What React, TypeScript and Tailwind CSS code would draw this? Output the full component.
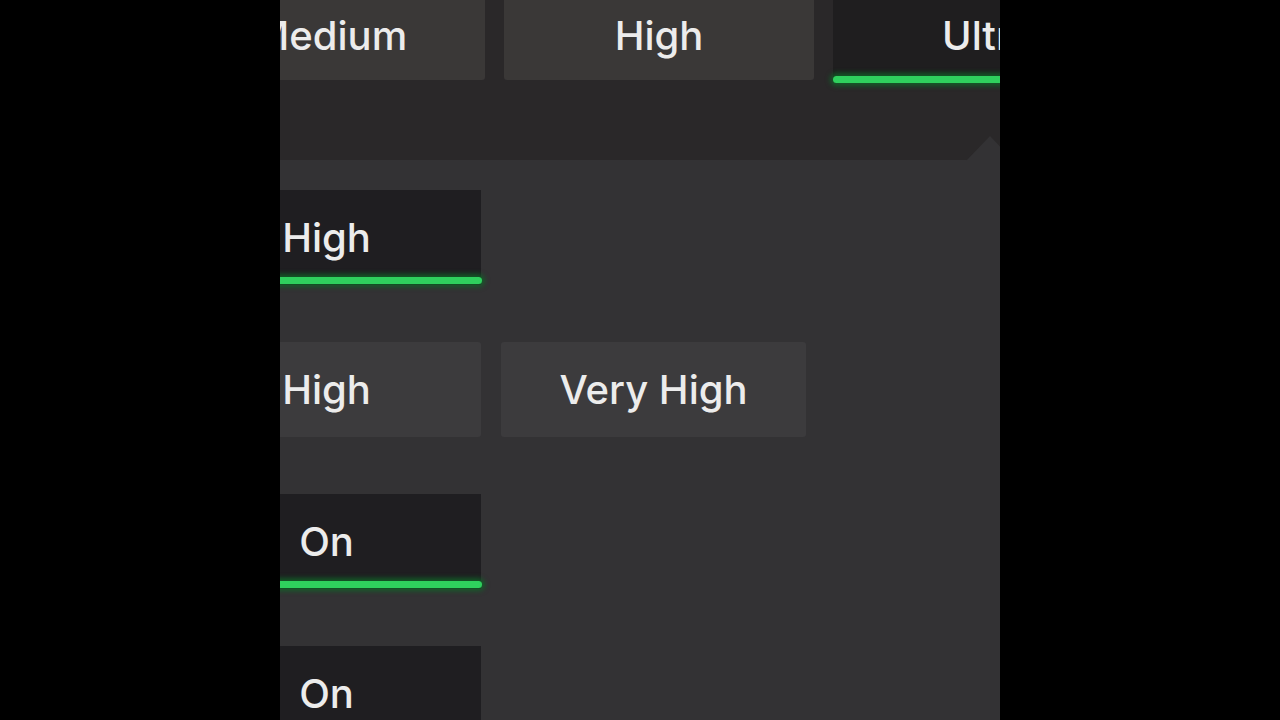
import React from "react";

const font = { fontFamily: "Inter, 'Noto Sans', sans-serif" };

function TopBtn({ label, selected }: { label: string; selected?: boolean }) {
  return (
    <div
      className={
        "relative shrink-0 w-[310px] h-[88px] flex items-center justify-center " +
        (selected ? "bg-[#1f1e1f]" : "bg-[#3a3837] rounded-[3px]")
      }
    >
      <span className="text-[40px] font-medium text-[#ececec] leading-none">
        {label}
      </span>
      {selected && (
        <div className="absolute left-0 right-0 bottom-[-3px] h-[7px] rounded-full bg-[#2fd05d] shadow-[0_0_5px_3px_rgba(16,100,40,0.85)]" />
      )}
    </div>
  );
}

function Btn({
  label,
  selected,
  wide,
}: {
  label: string;
  selected?: boolean;
  wide?: boolean;
}) {
  return (
    <div
      className={
        "relative shrink-0 h-[95px] flex items-center justify-center " +
        (wide ? "w-[309px] " : "w-[305px] ") +
        (selected ? "bg-[#1f1e21]" : "bg-[#3c3b3d] rounded-[3px]")
      }
    >
      <span className="text-[40px] font-medium text-[#ececec] leading-none">
        {label}
      </span>
      {selected && (
        <div className="absolute left-0 right-[-1px] bottom-[1px] h-[7px] rounded-full bg-[#2fd05d] shadow-[0_0_5px_3px_rgba(16,100,40,0.85)]" />
      )}
    </div>
  );
}

export default function App() {
  return (
    <div className="w-full h-[720px] bg-black flex justify-center overflow-hidden" style={font}>
      <div className="relative w-[720px] h-[720px] overflow-hidden flex flex-col">
        <div className="h-[160px] shrink-0 bg-[#2a2829]">
          <div className="flex gap-[19px] ml-[-105px] mt-[-8px]">
            <TopBtn label="Medium" />
            <TopBtn label="High" />
            <TopBtn label="Ultra" selected />
          </div>
        </div>
        <div className="flex-1 bg-[#333234] pt-[30px]">
          <div className="flex flex-col gap-[57px] ml-[-108px]">
            <div className="flex gap-[20px]">
              <Btn label="High" selected wide />
            </div>
            <div className="flex gap-[20px]">
              <Btn label="High" wide />
              <Btn label="Very High" />
            </div>
            <div className="flex gap-[20px]">
              <Btn label="On" selected wide />
            </div>
            <div className="flex gap-[20px]">
              <Btn label="On" selected wide />
            </div>
          </div>
        </div>
        <svg
          className="absolute left-[686px] top-[136px]"
          width="48"
          height="25"
          viewBox="0 0 48 25"
        >
          <polygon points="0,25 24,0 48,25" fill="#333234" />
        </svg>
      </div>
    </div>
  );
}
